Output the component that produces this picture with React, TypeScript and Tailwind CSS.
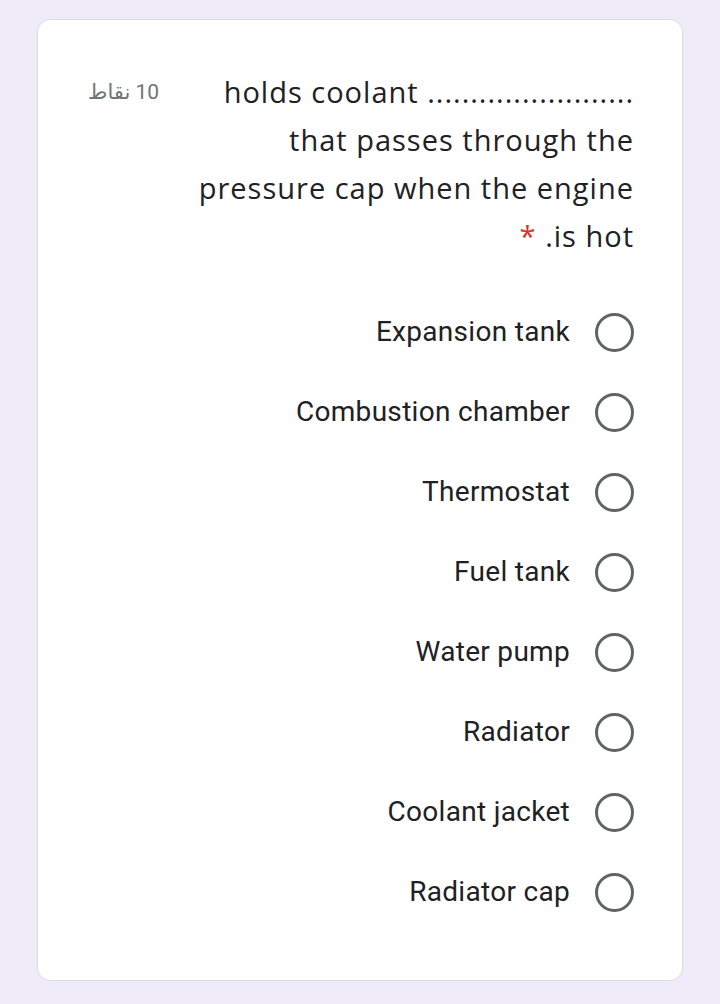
import React from 'react';

const options = [
  'Expansion tank',
  'Combustion chamber',
  'Thermostat',
  'Fuel tank',
  'Water pump',
  'Radiator',
  'Coolant jacket',
  'Radiator cap',
];

export default function App() {
  return (
    <div className="min-h-[1004px] bg-[#efebf8] px-[37px] pt-[19px] pb-[24px]" dir="rtl">
      <div className="bg-white border border-[#dadce0] rounded-[13px] pr-[48px] pl-[50px] pt-[48px] pb-[48px]">
        {/* Header: question + points */}
        <div className="flex items-start gap-[36px]">
          <div
            className="flex-1 text-right text-[#202124] text-[29px] leading-[48px] tracking-[1px]"
            style={{ fontFamily: '"Open Sans", Roboto, sans-serif' }}
          >
            <span dir="ltr">holds coolant ........................</span>
            <br />
            that passes through the
            <br />
            pressure cap when the engine
            <br />
            is hot.<span className="text-[#d93025]"> *</span>
          </div>
          <div
            className="text-[#70757a] text-[21px] leading-[48px] whitespace-nowrap"
            style={{ fontFamily: 'Roboto, "DejaVu Sans", sans-serif' }}
          >
            10 نقاط
          </div>
        </div>

        {/* Options */}
        <div className="mt-[32px] flex flex-col">
          {options.map((opt) => (
            <div key={opt} className="h-[80px] flex items-center gap-[25px]">
              <div className="w-[39px] h-[39px] rounded-full border-[3.5px] border-[#5f6368] shrink-0" />
              <span
                className="text-[#202124] text-[28px] tracking-[0.3px]"
                style={{ fontFamily: 'Roboto, sans-serif' }}
              >
                {opt}
              </span>
            </div>
          ))}
        </div>
      </div>
    </div>
  );
}
